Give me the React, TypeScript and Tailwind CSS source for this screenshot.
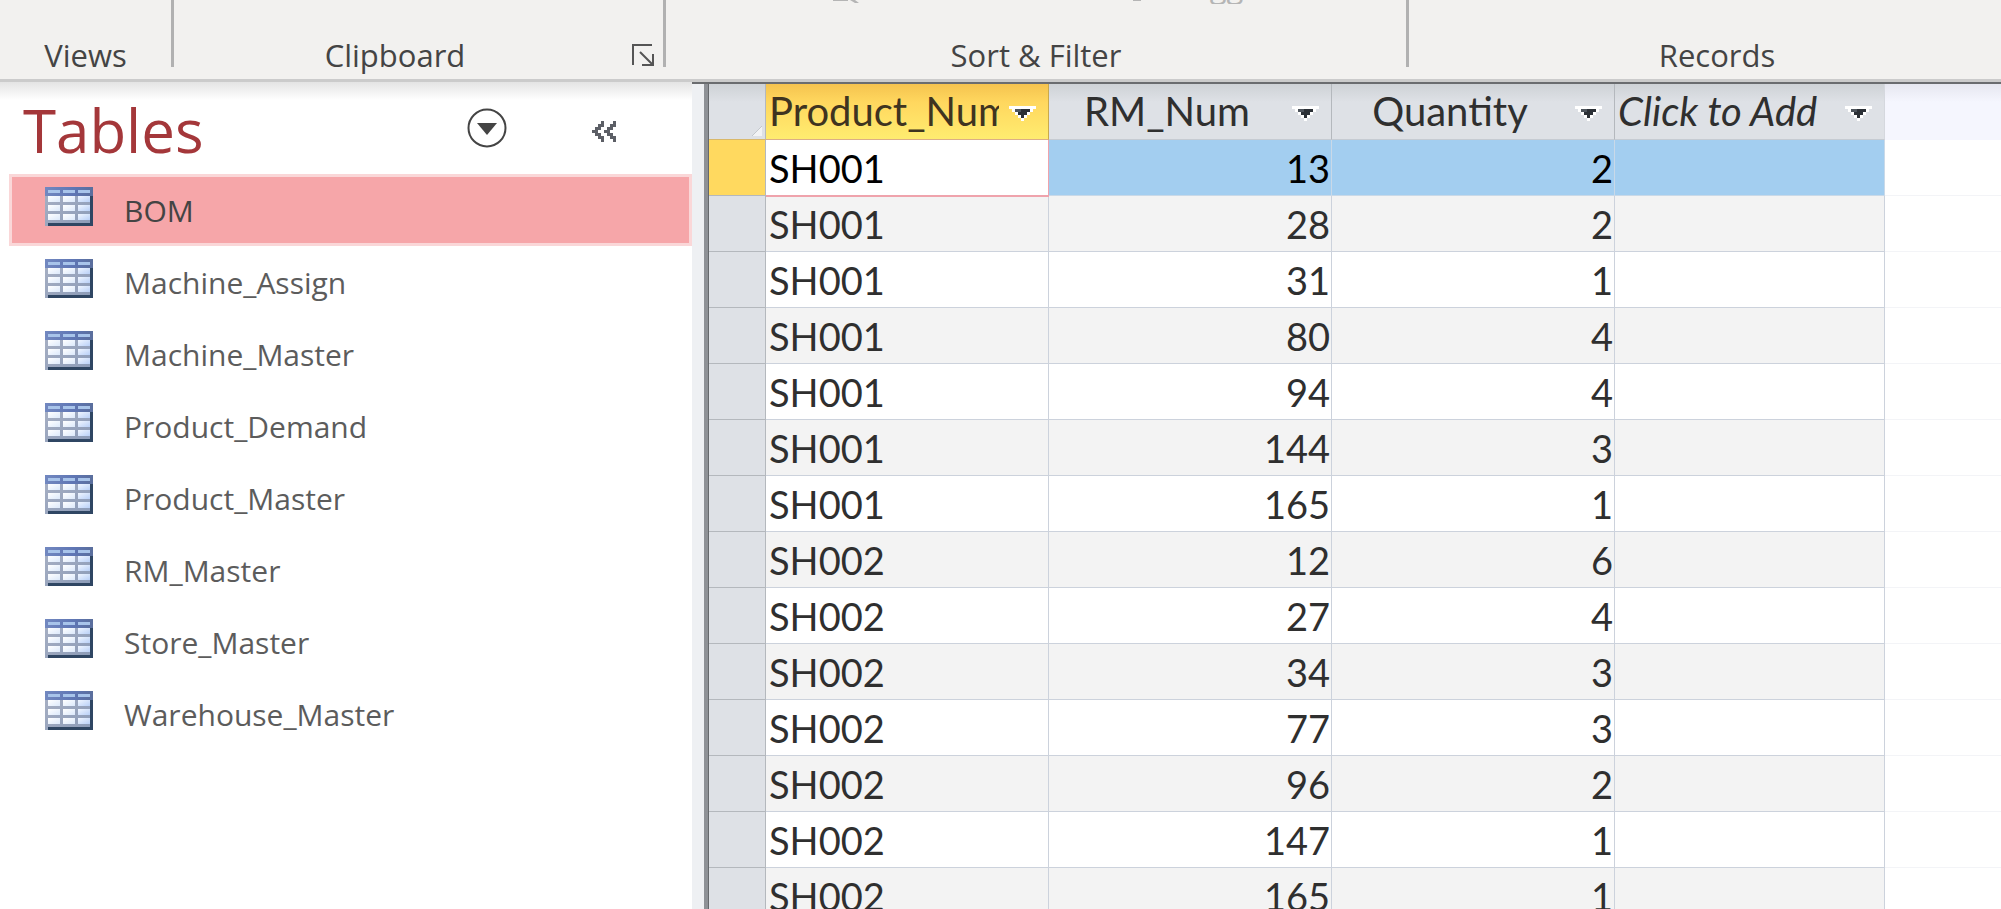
import React from "react";

const tables = [
  "BOM",
  "Machine_Assign",
  "Machine_Master",
  "Product_Demand",
  "Product_Master",
  "RM_Master",
  "Store_Master",
  "Warehouse_Master",
];

const rows: [string, number, number][] = [
  ["SH001", 13, 2],
  ["SH001", 28, 2],
  ["SH001", 31, 1],
  ["SH001", 80, 4],
  ["SH001", 94, 4],
  ["SH001", 144, 3],
  ["SH001", 165, 1],
  ["SH002", 12, 6],
  ["SH002", 27, 4],
  ["SH002", 34, 3],
  ["SH002", 77, 3],
  ["SH002", 96, 2],
  ["SH002", 147, 1],
  ["SH002", 165, 1],
];

function TableIcon() {
  const cols = [3, 18, 33];
  return (
    <svg width="48" height="39" viewBox="0 0 48 39" className="shrink-0" shapeRendering="crispEdges" aria-hidden="true">
      <defs>
        <linearGradient id="frame" x1="0" y1="0" x2="1" y2="1">
          <stop offset="0" stopColor="#a9b1c4" />
          <stop offset="1" stopColor="#8b9bb8" />
        </linearGradient>
        <linearGradient id="head" x1="0" y1="0" x2="1" y2="0">
          <stop offset="0" stopColor="#7288c0" />
          <stop offset="0.6" stopColor="#5f76b4" />
          <stop offset="1" stopColor="#5a6e9c" />
        </linearGradient>
        <linearGradient id="cell" x1="0" y1="0" x2="1" y2="1">
          <stop offset="0" stopColor="#ffffff" />
          <stop offset="1" stopColor="#dce9fb" />
        </linearGradient>
        <linearGradient id="cellEnd" x1="0" y1="0" x2="1" y2="1">
          <stop offset="0" stopColor="#f0f6ff" />
          <stop offset="1" stopColor="#b9d0f7" />
        </linearGradient>
      </defs>
      <rect width="48" height="39" fill="url(#frame)" />
      <rect width="48" height="9" fill="url(#head)" />
      <rect x="45" y="9" width="3" height="30" fill="#2f4663" />
      <rect x="3" y="36" width="45" height="3" fill="#2f4663" />
      {cols.map((x) => (
        <g key={x}>
          <rect x={x} y="3" width="12" height="3" fill="#a8c4ea" />
          {[9, 18, 27].map((y) => (
            <rect key={y} x={x} y={y} width="12" height="6" fill={x === 33 ? "url(#cellEnd)" : "url(#cell)"} />
          ))}
        </g>
      ))}
    </svg>
  );
}

function FilterArrow() {
  return (
    <svg width="27" height="15" viewBox="0 0 27 15" shapeRendering="crispEdges" aria-hidden="true">
      <path d="M0 0H27V3H24V6H21V9H18V12H15V15H12V12H9V9H6V6H3V3H0Z" fill="#fff" />
      <path d="M6 3H21V6H18V9H15V12H12V9H9V6H6Z" fill="#2b3036" />
      <path d="M6 3H12V6H6Z" fill="#4d545c" />
    </svg>
  );
}

function HeaderCell({ label, className, labelClass }: { label: string; className: string; labelClass: string }) {
  return (
    <th scope="col" className={`h-[56px] border-r border-b p-0 font-normal ${className}`}>
      <div className="flex items-center pr-[12px] pl-[3px]">
        <span className={`min-w-0 flex-1 overflow-hidden text-[40px] leading-[55px] whitespace-nowrap ${labelClass}`}>
          {label}
        </span>
        <button type="button" aria-label={`Filter ${label}`} className="ml-[10px] shrink-0 pt-1">
          <FilterArrow />
        </button>
      </div>
    </th>
  );
}

export default function App() {
  return (
    <div className="flex h-screen flex-col overflow-hidden bg-white font-['Open_Sans',sans-serif]">
      <header className="flex h-[82px] shrink-0 border-b-[3px] border-[#cbcbcb] bg-[#f2f1ef] text-[31px] leading-[36px] text-[#444]">
        <section className="flex h-[67px] w-[174px] shrink-0 items-end justify-center border-r-[3px] border-[#b1b1b1]">
          <h2 className="-mb-[6px]">Views</h2>
        </section>
        <section className="flex h-[67px] w-[492px] shrink-0 items-end border-r-[3px] border-[#b1b1b1] pr-2">
          <h2 className="-mb-[6px] flex-1 pr-4 text-center">Clipboard</h2>
          <button type="button" aria-label="Clipboard options" className="shrink-0">
            <svg width="23" height="23" viewBox="0 0 23 23" fill="none" stroke="#555" strokeWidth="2" aria-hidden="true">
              <path d="M1 21V1H20M8 8L20 20M21 10V21H10" />
            </svg>
          </button>
        </section>
        <section className="flex h-[67px] w-[743px] shrink-0 flex-col items-center justify-between border-r-[3px] border-[#b1b1b1]">
          <div className="flex h-[4px] w-full items-end overflow-hidden pl-[166px] text-[#b5b5b5]">
            <svg width="28" height="4" viewBox="0 0 28 4" aria-hidden="true">
              <path d="M1 0H16V1H1ZM18 0H23L27 3H23Z" fill="#b5b5b5" />
            </svg>
            <svg width="10" height="4" viewBox="0 0 10 4" className="ml-[272px]" aria-hidden="true">
              <path d="M1 0H9V1H1Z" fill="#b5b5b5" />
            </svg>
            <button type="button" className="ml-[32px] whitespace-nowrap">Toggle Filter</button>
          </div>
          <h2 className="-mb-[6px]">Sort &amp; Filter</h2>
        </section>
        <section className="flex h-[67px] flex-1 items-end justify-center pl-6">
          <h2 className="-mb-[6px]">Records</h2>
        </section>
      </header>

      <div className="flex min-h-0 flex-1">
        <nav aria-label="Tables" className="w-[692px] shrink-0 bg-[linear-gradient(to_bottom,#e4e4e4,#fff_18px)]">
          <div className="flex h-[92px] items-center pr-[76px] pl-[23px]">
            <h1 className="flex-1 pt-1 text-[60px] leading-[88px] text-[#a4373a]">Tables</h1>
            <button type="button" aria-label="Choose category" className="mr-[85px]">
              <svg width="40" height="40" viewBox="0 0 40 40" aria-hidden="true">
                <circle cx="20" cy="20" r="18.5" fill="none" stroke="#444" strokeWidth="2" />
                <path d="M10 15H30L20 27Z" fill="#444" />
              </svg>
            </button>
            <button type="button" aria-label="Collapse pane" className="pt-[6px]">
              <svg width="24" height="21" viewBox="0 0 24 21" fill="#5c5f66" shapeRendering="crispEdges" aria-hidden="true">
                <path d="M9 0H12V6H9V9H6V12H9V15H12V21H9V18H6V15H3V12H0V9H3V6H6V3H9Z" />
                <path d="M21 0H24V6H21V9H18V12H21V15H24V21H21V18H18V15H15V12H12V9H15V6H18V3H21Z" />
              </svg>
            </button>
          </div>
          <ul className="pl-[9px]">
            {tables.map((name, i) => (
              <li key={name}>
                <a
                  href={`#${name}`}
                  className={`flex h-[72px] items-center border-[3px] pt-[2px] pl-[33px] text-[30px] leading-[36px] ${
                    i === 0 ? "border-[#fad7d8] bg-[#f6a6a9] text-[#444]" : "border-transparent text-[#5c5c5c]"
                  }`}
                >
                  <span className="flex pb-[10px]">
                    <TableIcon />
                  </span>
                  <span className="ml-[31px]">{name}</span>
                </a>
              </li>
            ))}
          </ul>
        </nav>

        <main className="flex min-w-0 flex-1 overflow-hidden border-t-2 border-[#6a6c6f] bg-[#eef0f3]">
          <div className="ml-3 w-[5px] shrink-0 border-r border-[#66696d] bg-[#8e9196]" />
          <table className="w-[1176px] shrink-0 table-fixed border-separate border-spacing-0 self-start font-['Lato',sans-serif] text-[38px] leading-[53px] text-[#2f2f2f]">
            <colgroup>
              <col className="w-[57px]" />
              <col className="w-[283px]" />
              <col className="w-[283px]" />
              <col className="w-[283px]" />
              <col className="w-[270px]" />
            </colgroup>
            <thead>
              <tr>
                <td className="h-[56px] border-r border-b border-r-[#b4b8bd] border-b-[#d9b86a] bg-[linear-gradient(to_bottom,#ced2d6,#dee1e6_18px)] p-0 align-bottom">
                  <svg width="10" height="10" viewBox="0 0 10 10" className="mr-[3px] mb-[3px] ml-auto" aria-hidden="true">
                    <path d="M10 0V10H0Z" fill="#f2f3f5" />
                    <path d="M10 0L0 10" stroke="#c4c8cd" />
                  </svg>
                </td>
                <HeaderCell
                  label="Product_Num"
                  className="border-r-[#c9a94c] border-b-[#dcae86] bg-[linear-gradient(to_bottom,#f5c34f,#ffd75e_18px,#ffec70)] text-[#3f3420]"
                  labelClass="text-left"
                />
                <HeaderCell
                  label="RM_Num"
                  className="border-r-[#b4b8bd] border-b-[#c6cbd2] bg-[linear-gradient(to_bottom,#ced2d6,#dee1e6_18px)]"
                  labelClass="text-center"
                />
                <HeaderCell
                  label="Quantity"
                  className="border-r-[#b4b8bd] border-b-[#c6cbd2] bg-[linear-gradient(to_bottom,#ced2d6,#dee1e6_18px)]"
                  labelClass="text-center"
                />
                <HeaderCell
                  label="Click to Add"
                  className="border-r-[#d5d8de] border-b-[#c6cbd2] bg-[linear-gradient(to_bottom,#ced2d6,#dee1e6_18px)] italic"
                  labelClass="text-left"
                />
              </tr>
            </thead>
            <tbody>
              {rows.map(([product, rm, qty], i) => {
                const tone =
                  i === 0
                    ? "bg-[#a3cef0] text-black border-[#c9d9e8]"
                    : i % 2 === 1
                      ? "bg-[#f3f3f3] border-[#ccd2dc]"
                      : "bg-white border-[#ccd2dc]";
                return (
                  <tr key={i}>
                    <th
                      scope="row"
                      aria-label={`Row ${i + 1}`}
                      className={`h-[56px] border-r border-b border-[#b4b8bd] p-0 ${i === 0 ? "bg-[#ffd95f]" : "bg-[#dee1e6]"}`}
                    />
                    <td
                      className={`h-[56px] border-r border-b p-0 pt-[2px] pl-[3px] ${
                        i === 0 ? "relative border-[#efa3ac] bg-white text-black shadow-[0_1px_0_#efa3ac]" : tone
                      }`}
                    >
                      {product}
                    </td>
                    <td className={`h-[56px] border-r border-b p-0 pt-[2px] pr-px text-right ${tone}`}>{rm}</td>
                    <td className={`h-[56px] border-r border-b p-0 pt-[2px] pr-px text-right ${tone}`}>{qty}</td>
                    <td className={`h-[56px] border-r border-b p-0 ${tone}`} />
                  </tr>
                );
              })}
            </tbody>
          </table>
          <div className="min-w-0 flex-1 bg-white">
            <div className="h-[56px] bg-[linear-gradient(to_bottom,#e6e7f0,#f5f6fe_18px)]" />
            {rows.map((_, i) => (
              <div key={i} className="h-[56px] border-b border-[#f3f4f7]" />
            ))}
          </div>
        </main>
      </div>
    </div>
  );
}
